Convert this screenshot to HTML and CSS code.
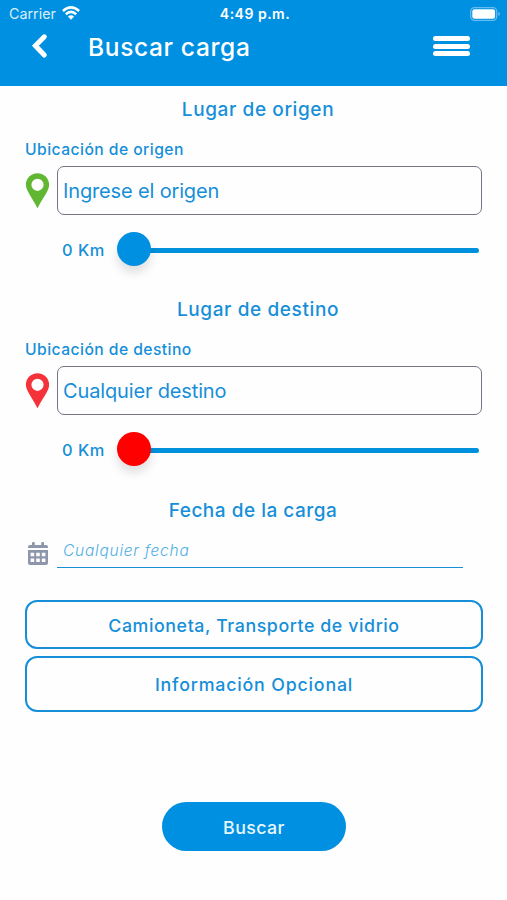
FILE: index.html
```html
<!DOCTYPE html>
<html lang="es">
<head>
<meta charset="utf-8">
<title>Buscar carga</title>
<link rel="stylesheet" href="styles.css">
</head>
<body>
<header class="header">
  <div class="status">
    <div class="carrier"><span class="carrier-name">Carrier</span>
      <svg class="wifi" width="18" height="14" viewBox="0 0 18 14" fill="none" stroke="#fff" stroke-width="2.5"><path d="M.9 5Q9-2.2 17.1 5M3.8 8.2Q9 3.5 14.2 8.2"/><path d="M5.9 10.6Q9 7.8 12.1 10.6L9 13.8Z" fill="#fff" stroke="none"/></svg>
    </div>
    <span class="time">4:49 p.m.</span>
    <svg class="battery" width="31" height="14" viewBox="0 0 31 14"><rect x=".7" y=".7" width="26" height="12.6" rx="3.8" fill="none" stroke="#66bced" stroke-width="1.3"/><rect x="2.3" y="2.3" width="22.8" height="9.4" rx="2.3" fill="#fff"/><path d="M28.4 4.8q3.2 2.2 0 4.4z" fill="#66bced"/></svg>
  </div>
  <div class="nav">
    <svg class="back" width="18" height="26" viewBox="0 0 18 26" fill="none" stroke="#fff" stroke-width="5" stroke-linecap="round" stroke-linejoin="miter"><path d="M14.3 3.8 5.4 12.7l8.9 9.3"/></svg>
    <h1 class="title">Buscar carga</h1>
    <div class="menu"><i></i><i></i><i></i></div>
  </div>
</header>
<main class="form">
  <section class="place">
    <h2 class="heading">Lugar de origen</h2>
    <div class="label">Ubicación de origen</div>
    <div class="field">
      <svg class="pin green" width="24" height="36" viewBox="0 0 24 36"><path fill-rule="evenodd" d="M12.5.3C6 .3.9 5.3.9 11.8c0 6.2 6.4 12.9 11.6 23.5 5.2-10.6 11.6-17.3 11.6-23.5C24.1 5.3 19 .3 12.5.3Zm0 5.4a6.1 6.1 0 1 1 0 12.2 6.1 6.1 0 0 1 0-12.2Z"/></svg>
      <div class="input origin">Ingrese el origen</div>
    </div>
    <div class="range"><span class="km">0 Km</span><div class="track"><div class="thumb"></div></div></div>
  </section>
  <section class="place">
    <h2 class="heading">Lugar de destino</h2>
    <div class="label">Ubicación de destino</div>
    <div class="field">
      <svg class="pin red" width="24" height="36" viewBox="0 0 24 36"><path fill-rule="evenodd" d="M12.5.3C6 .3.9 5.3.9 11.8c0 6.2 6.4 12.9 11.6 23.5 5.2-10.6 11.6-17.3 11.6-23.5C24.1 5.3 19 .3 12.5.3Zm0 5.4a6.1 6.1 0 1 1 0 12.2 6.1 6.1 0 0 1 0-12.2Z"/></svg>
      <div class="input destination">Cualquier destino</div>
    </div>
    <div class="range"><span class="km">0 Km</span><div class="track"><div class="thumb thumb-red"></div></div></div>
  </section>
  <h2 class="heading load-date">Fecha de la carga</h2>
  <div class="date">
    <svg class="calendar" width="20" height="23" viewBox="0 0 20 23" fill="#8e96ab"><path fill-rule="evenodd" d="M0 6V5a2 2 0 0 1 2-2h2V1a1 1 0 0 1 1-1h.8a1 1 0 0 1 1 1v2h6.4V1a1 1 0 0 1 1-1h.8a1 1 0 0 1 1 1v2h2a2 2 0 0 1 2 2v1ZM0 8h20v13a2 2 0 0 1-2 2H2a2 2 0 0 1-2-2ZM2.6 10.8v3.4h3.6v-3.4Zm5.6 0v3.4h3.6v-3.4Zm5.6 0v3.4h3.6v-3.4ZM2.6 16.6V20h3.6v-3.4Zm5.6 0V20h3.6v-3.4Zm5.6 0V20h3.6v-3.4Z"/></svg>
    <div class="date-input">Cualquier fecha</div>
  </div>
  <div class="option vehicle">Camioneta, Transporte de vidrio</div>
  <div class="option optional">Información Opcional</div>
  <div class="submit">Buscar</div>
</main>
</body>
</html>
```

FILE: styles.css
```css
* { box-sizing: border-box; }
body { margin: 0; width: 507px; height: 900px; overflow: hidden; background: #fefefe; color: #168fd8; font-family: Inter, "Liberation Sans", sans-serif; font-weight: 500; }
svg { display: block; flex: none; }
.header { height: 86px; background: #0090e1; color: #fff; }
.status { height: 27px; display: grid; grid-template-columns: 1fr auto 1fr; align-items: center; padding: 0 6px 0 9px; }
.carrier { display: flex; align-items: center; gap: 6px; font-size: 14.3px; font-weight: 400; color: #d9effb; }
.wifi { margin-top: -2px; }
.time { font-size: 14px; font-weight: 600; letter-spacing: .5px; }
.battery { justify-self: end; }
.nav { display: flex; align-items: center; height: 38px; padding: 0 37px 0 30px; }
.title { margin: 2px 0 0 40px; flex: 1; white-space: nowrap; font-size: 24.5px; font-weight: 500; line-height: 38px; letter-spacing: .65px; }
.menu { display: grid; gap: 2.5px; width: 37px; }
.menu i { height: 5px; border-radius: 2.5px; background: #fff; }
.form { padding: 0 25px; }
.place { height: 200.4px; }
.heading { margin: 0 0 0 9px; height: 46px; line-height: 48px; text-align: center; font-size: 19px; font-weight: 500; letter-spacing: .6px; }
.load-date { height: 45px; line-height: 47px; margin-left: -1px; letter-spacing: .5px; }
.label { height: 34px; line-height: 35px; font-size: 15.7px; letter-spacing: .43px; }
.field { display: flex; align-items: center; gap: 8px; }
.green { fill: #62b732; }
.red { fill: #f33339; }
.input { width: 426px; height: 49px; border: 1.6px solid #777487; border-radius: 7px; line-height: 48px; padding-left: 5px; font-size: 20px; font-weight: 400; letter-spacing: -.15px; }
.range { display: flex; align-items: center; height: 70px; padding-left: 37px; }
.km { width: 72px; font-size: 16.4px; letter-spacing: .5px; }
.track { width: 345px; height: 5px; border-radius: 3px; background: #0090dc; }
.thumb { width: 34px; height: 34px; border-radius: 50%; background: #0090e1; margin: -15.5px 0 0 -17px; box-shadow: 0 7px 10px rgba(0,0,0,.12); }
.thumb-red { background: #f00; }
.date { display: flex; height: 36px; padding-left: 3px; gap: 9px; }
.calendar { margin-top: 10px; }
.date-input { width: 406px; border-bottom: 1px solid #168fd8; padding-left: 6px; line-height: 37px; font-size: 15.5px; font-style: italic; font-weight: 300; letter-spacing: .76px; color: #51aee2; }
.option { border: 2px solid #168fd8; border-radius: 12px; width: 458px; padding-top: 2px; display: flex; align-items: center; justify-content: center; font-size: 17.8px; letter-spacing: .58px; }
.vehicle { height: 49px; margin-top: 32px; }
.optional { height: 56px; margin-top: 7px; letter-spacing: .82px; }
.submit { width: 184px; height: 49px; margin: 90px auto 0 137px; padding-top: 2px; border-radius: 25px; background: #0090e1; color: #e8f7ff; display: flex; align-items: center; justify-content: center; font-size: 17.8px; letter-spacing: .4px; }
```
